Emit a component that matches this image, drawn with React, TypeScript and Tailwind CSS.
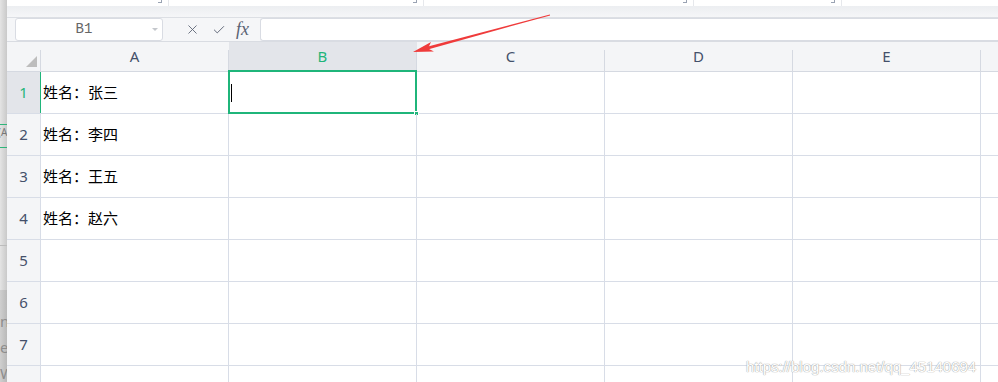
import React from 'react';
import { X, Check } from 'lucide-react';

const columns = ['A', 'B', 'C', 'D', 'E'];

const rows = [
  { id: 1, name: '姓名：张三' },
  { id: 2, name: '姓名：李四' },
  { id: 3, name: '姓名：王五' },
  { id: 4, name: '姓名：赵六' },
  { id: 5, name: '' },
  { id: 6, name: '' },
  { id: 7, name: '' },
  { id: 8, name: '' },
];

const Mark: React.FC<{ gap: string }> = ({ gap }) => (
  <div className={`flex h-full ${gap}`}>
    <div className="w-[4px] h-[3px] border-r border-b border-[#9aa3b3]" />
    <div className="ml-[6px] w-px h-full bg-[#e6e8ec]" />
  </div>
);

const App: React.FC = () => {
  return (
    <div className="relative w-[998px] h-[382px] overflow-hidden flex bg-white font-['Noto_Sans','Noto_Sans_CJK_SC',sans-serif]">
      {/* background window strip */}
      <div className="w-[7px] flex flex-col shrink-0">
        <div className="h-[290px] shrink-0 bg-linear-to-r from-[#e4e4e4] to-[#c9c9c9] flex flex-col">
          <div className="h-[124px] shrink-0" />
          <div className="h-px shrink-0 bg-[#2fb57a]" />
          <div className="text-[10px] leading-[14px] text-[#777] -ml-[2px]">(A</div>
          <div className="h-[8px] shrink-0" />
          <div className="h-px shrink-0 bg-[#2fb57a]" />
          <div className="h-[97px] shrink-0" />
          <div className="h-px shrink-0 bg-[#bcbcbc]" />
        </div>
        <div className="flex-1 bg-linear-to-r from-[#cfcfcf] to-[#b9b9b9] flex flex-col text-[15px] leading-[26px] text-[#8d8d8d] pt-[18px]">
          <span>n</span>
          <span>e</span>
          <span>W</span>
        </div>
      </div>

      <div className="flex-1 flex flex-col min-w-0">
        {/* toolbar remnants */}
        <div className="h-[6px] shrink-0 flex bg-white">
          <Mark gap="ml-[151px]" />
          <Mark gap="ml-[244px]" />
          <Mark gap="ml-[259px]" />
          <Mark gap="ml-[137px]" />
        </div>
        <div className="h-[12px] shrink-0 bg-linear-to-b from-[#eceef1] to-[#f5f6f8] border-b border-[#dcdfe4]" />

        {/* formula bar */}
        <div className="h-[24px] shrink-0 flex border-b border-[#d9dce2] bg-[#f5f6f8]">
          <div className="ml-[8px] w-[148px] bg-white border border-[#d9dce3] rounded-[3px] flex items-center">
            <span className="flex-1 text-center text-[14px] text-[#666] font-['Liberation_Mono',monospace]">B1</span>
            <span className="mr-[4px] w-0 h-0 border-l-[3px] border-r-[3px] border-t-[3px] border-l-transparent border-r-transparent border-t-[#c4c7cc]" />
          </div>
          <div className="w-[97px] flex items-center text-[#5a6273]">
            <X className="ml-[22px] w-[15px] h-[15px]" strokeWidth={1.4} />
            <Check className="ml-[12px] w-[14px] h-[14px]" strokeWidth={1.6} />
            <span className="ml-[10px] italic text-[18px] leading-none font-['Liberation_Serif',serif] -mt-[2px]">fx</span>
          </div>
          <div className="flex-1 bg-white border border-r-0 border-[#d9dce3] rounded-l-[3px]" />
        </div>

        {/* column header */}
        <div className="h-[30px] shrink-0 flex border-b border-[#d5d9e1] bg-[#f4f5f7] text-[15px] text-[#44506a]">
          <div className="w-[34px] shrink-0 flex items-end">
            <div className="flex-1 flex justify-end pb-[4px] pr-[3px]">
              <div className="w-0 h-0 border-l-[11px] border-b-[11px] border-l-transparent border-b-[#bdbdbd]" />
            </div>
            <div className="w-px h-[21px] bg-[#d5d9e1]" />
          </div>
          {columns.map((c) => (
            <div
              key={c}
              className={`w-[188px] shrink-0 flex items-stretch ${c === 'B' ? 'bg-[#e3e5ea] text-[#1fb57a]' : ''}`}
            >
              <div className="flex-1 flex items-center justify-center">{c}</div>
              <div className="w-px h-[21px] self-end bg-[#d5d9e1]" />
            </div>
          ))}
          <div className="flex-1" />
        </div>

        {/* grid rows */}
        {rows.map((r) => (
          <div key={r.id} className="h-[42px] shrink-0 flex border-b border-[#d8dde7]">
            <div
              className={`w-[34px] shrink-0 flex items-center justify-center text-[15px] border-r ${
                r.id === 1
                  ? 'bg-[#e3e5ea] text-[#1fb57a] border-[#1fb57a]'
                  : 'bg-[#f4f5f7] text-[#44506a] border-[#d8dde7]'
              }`}
            >
              {r.id}
            </div>
            <div className="w-[188px] shrink-0 border-r border-[#d8dde7] flex items-center pl-[2px] text-[15px] text-black font-['Noto_Sans_CJK_SC',sans-serif]">
              {r.name}
            </div>
            <div className="w-[188px] shrink-0 border-r border-[#d8dde7] relative">
              {r.id === 1 && (
                <>
                  <div className="absolute -left-[1px] -right-[1px] -top-[2px] -bottom-[1px] border-2 border-[#1fb57a]" />
                  <div className="absolute left-[2px] top-[12px] w-px h-[18px] bg-black" />
                  <div className="absolute -right-[3px] -bottom-[3px] w-[5px] h-[5px] bg-[#1fb57a] border border-white" />
                </>
              )}
            </div>
            <div className="w-[188px] shrink-0 border-r border-[#d8dde7]" />
            <div className="w-[188px] shrink-0 border-r border-[#d8dde7]" />
            <div className="w-[188px] shrink-0 border-r border-[#d8dde7]" />
            <div className="flex-1" />
          </div>
        ))}
      </div>

      {/* annotation arrow */}
      <svg className="absolute left-0 top-0 pointer-events-none" width="998" height="382">
        <polygon points="426.9,49.7 426.1,46.9 549.9,14.6 550.1,15.4" fill="#ef3b3b" />
        <polygon points="413,52 431,42 428,48.5 434,51.5" fill="#ef3b3b" />
      </svg>

      {/* watermark */}
      <div className="absolute left-[746px] top-[356px] text-[15px] text-white font-['Liberation_Sans',sans-serif] [text-shadow:0_0_1px_#a0a0a0,0_0_1px_#a0a0a0]">
        https://blog.csdn.net/qq_45140694
      </div>
    </div>
  );
};

export default App;
